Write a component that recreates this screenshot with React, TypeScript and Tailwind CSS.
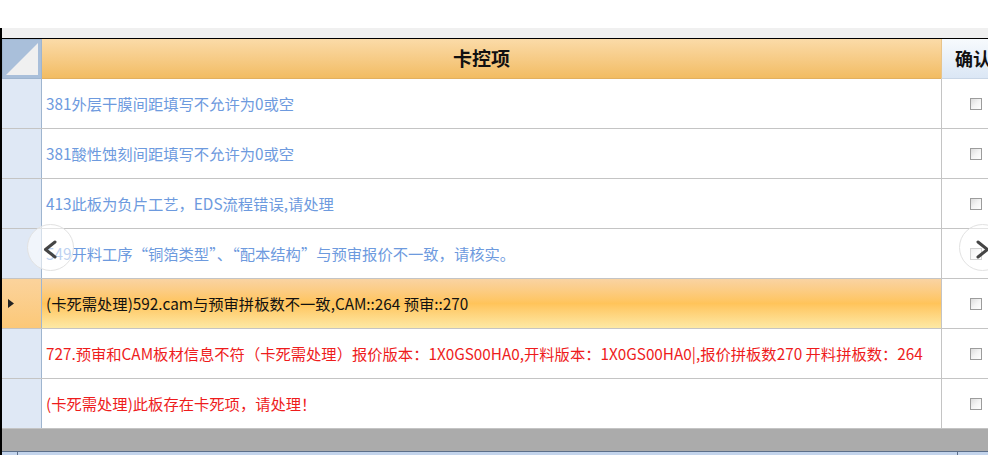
import React from "react"

// Row data for the 卡控项 grid
type Row = { text: string; tone: "blue" | "black" | "red"; selected?: boolean }

const ROWS: Row[] = [
  { text: "381外层干膜间距填写不允许为0或空", tone: "blue" },
  { text: "381酸性蚀刻间距填写不允许为0或空", tone: "blue" },
  { text: "413此板为负片工艺，EDS流程错误,请处理", tone: "blue" },
  { text: "549开料工序“铜箔类型”、“配本结构”与预审报价不一致，请核实。", tone: "blue" },
  { text: "(卡死需处理)592.cam与预审拼板数不一致,CAM::264 预审::270", tone: "black", selected: true },
  {
    text: "727.预审和CAM板材信息不符（卡死需处理）报价版本：1X0GS00HA0,开料版本：1X0GS00HA0|,报价拼板数270 开料拼板数：264",
    tone: "red",
  },
  { text: "(卡死需处理)此板存在卡死项，请处理！", tone: "red" },
]

const TONE = {
  blue: "text-[#6d9ade]",
  black: "text-[#111111]",
  red: "text-[#ee1c1c]",
} as const

const FONT = "font-['Noto_Sans_CJK_SC',sans-serif]"

function Checkbox() {
  return (
    <span className="block h-[12px] w-[12px] border border-[#9c9c9c] bg-gradient-to-br from-[#dcdcdc] via-[#f4f4f4] to-[#ffffff]" />
  )
}

function NavCircle({ dir }: { dir: "left" | "right" }) {
  return (
    <div
      className={`absolute top-[224px] h-[47px] w-[47px] rounded-full border border-[#e2e2e2] bg-white/55 ${
        dir === "left" ? "left-[27px]" : "left-[959px]"
      }`}
    >
      <svg width="47" height="47" viewBox="0 0 47 47" className="absolute left-[-1px] top-[-1px]">
        <polyline
          points={dir === "left" ? "28,18 18.5,25.5 28,33" : "19,18 28.5,25.5 19,33"}
          fill="none"
          stroke="#454545"
          strokeWidth="3"
          strokeLinecap="round"
          strokeLinejoin="round"
        />
      </svg>
    </div>
  )
}

export default function App() {
  return (
    <div className={`relative h-[455px] w-[988px] overflow-hidden bg-white ${FONT}`}>
      <div className="h-[28px] bg-white" />
      <div className="flex h-[427px] flex-col border-l-2 border-black">
        <div className="h-[10px] bg-[#f0f0f0]" />

        {/* header */}
        <div className="grid h-[41px] grid-cols-[40px_899px_1fr] border-t border-black">
          <div className="relative border border-[#9fb5cf] bg-[#a9bfda]">
            <svg className="absolute inset-0" width="38" height="38" viewBox="0 0 38 38">
              <polygon points="35,3 35,35 3,35" fill="#f0f0f0" />
            </svg>
          </div>
          <div className="flex items-center justify-center border-b border-[#e2b060] bg-gradient-to-b from-[#fbdba8] to-[#f2bc62] pr-[20px] text-[19px] font-bold text-[#111]">
            卡控项
          </div>
          <div className="flex items-center border-b border-l border-[#c9d6e6] border-l-[#e8c48a] bg-gradient-to-b from-[#f7fafd] to-[#dbe7f5] pl-[13px] text-[18px] font-bold whitespace-nowrap text-[#111]">
            确认
          </div>
        </div>

        {/* body rows */}
        {ROWS.map((r, i) => (
          <div key={i} className="grid h-[50px] grid-cols-[40px_899px_1fr] border-b border-[#c4c4c4]">
            <div
              className={`flex items-center border-r border-[#9fb5cf] pl-[6px] ${
                r.selected ? "bg-gradient-to-b from-[#fbd39c] to-[#fcc877]" : "bg-[#dfe8f5]"
              }`}
            >
              {r.selected && (
                <svg width="6" height="9" viewBox="0 0 6 9">
                  <polygon points="0,0 6,4.5 0,9" fill="#222" />
                </svg>
              )}
            </div>
            <div
              className={`flex items-center whitespace-nowrap pl-[4px] text-[15.3px] ${TONE[r.tone]} ${
                r.selected ? "bg-gradient-to-b from-[#f9d3a2] via-[#ffc45a] to-[#fde9a4]" : "bg-white"
              }`}
            >
              {r.text}
            </div>
            <div className="flex items-center border-l border-[#c4c4c4] bg-white pl-[28px]">
              <Checkbox />
            </div>
          </div>
        ))}

        {/* empty area + scroll strip */}
        <div className="flex-1 bg-[#ababab]" />
        <div className="grid h-[4px] grid-cols-[16px_940px_1fr] border-t border-[#5c6f8a] bg-[#c3d4ec]">
          <div className="border-r border-[#5c6f8a]" />
          <div className="border-r border-[#5c6f8a]" />
          <div />
        </div>
      </div>

      <NavCircle dir="left" />
      <NavCircle dir="right" />
    </div>
  )
}
